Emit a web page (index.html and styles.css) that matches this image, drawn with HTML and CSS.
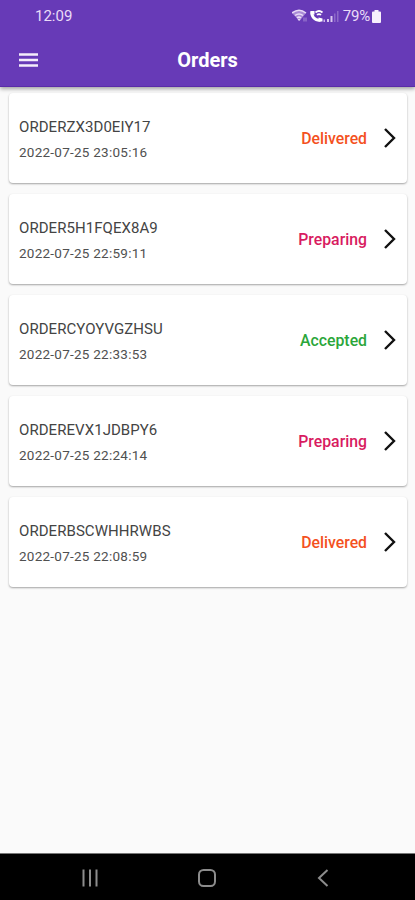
FILE: index.html
```html
<!DOCTYPE html>
<html lang="en">
<head>
  <meta charset="UTF-8" />
  <meta name="viewport" content="width=device-width, initial-scale=1.0" />
  <title>Orders</title>
  <link rel="stylesheet" href="styles.css">
</head>
<body>
  <header class="header">
    <div class="status-bar">
      <span class="time">12:09</span>
      <div class="status-icons">
        <svg width="48" height="16" viewBox="0 0 48 16">
          <!-- wifi -->
          <path d="M0 5Q7-.5 14 5L7.500 13z" fill="#a98bd6" />
          <g fill="none" stroke="#e9dcf7" stroke-width="1.500">
            <path d="M0 5Q7-.5 14 5" />
            <path d="M3 7.500Q7 4.300 11 7.500" />
            <path d="M5 10Q7 8.200 9 10" />
          </g>
          <path d="M5.500 11h3L7 13z" fill="#e9dcf7" />
          <path d="M12 9.500v4M14 9.500v4" stroke="#a98bd6" />
          <!-- wifi calling -->
          <path d="M20 3.500C19 8 22.500 12.800 28.500 12.300" fill="none" stroke="#fff" stroke-width="2.800" />
          <path d="M18.500 3h4v3.500h-4zM26.500 9.500l4 1v3h-4z" fill="#fff" />
          <path d="M23.500 4.500Q27 1.500 30.500 4.500M25 7Q27 5 29 7" fill="none" stroke="#fff" stroke-width="1.700" />
          <!-- signal -->
          <path d="M31.500 11.500H33V14h-1.500z" fill="#c9b2e8" />
          <path d="M35 11h2v3h-2zM38.500 8h2v6h-2z" fill="#d9c6f0" />
          <path d="M42 5.500h1.500V14H42zM45 3h1.500v11H45z" fill="#8d69c8" />
        </svg>
        <span class="battery-text">79%</span>
        <svg width="9" height="13" viewBox="0 0 9 13">
          <path d="M2.500 0h4v1.500H8A1 1 0 0 1 9 2.500V12a1 1 0 0 1-1 1H1a1 1 0 0 1-1-1V2.500A1 1 0 0 1 1 1.500h1.500z" fill="#f7effc" />
        </svg>
      </div>
    </div>
    <div class="app-bar">
      <svg class="menu" width="19" height="14" viewBox="0 0 19 14"><path d="M0 1.500h19M0 7h19M0 12.500h19" /></svg>
      <h1>Orders</h1>
    </div>
  </header>

  <main class="orders">
    <div class="card">
      <div class="info">
        <p class="order-id">ORDERZX3D0EIY17</p>
        <p class="date">2022-07-25 23:05:16</p>
      </div>
      <span class="status delivered">Delivered</span>
      <svg class="arrow" width="14" height="22" viewBox="0 0 14 22"><path d="M2 2l9 9-9 9" /></svg>
    </div>

    <div class="card">
      <div class="info">
        <p class="order-id">ORDER5H1FQEX8A9</p>
        <p class="date">2022-07-25 22:59:11</p>
      </div>
      <span class="status preparing">Preparing</span>
      <svg class="arrow" width="14" height="22" viewBox="0 0 14 22"><path d="M2 2l9 9-9 9" /></svg>
    </div>

    <div class="card">
      <div class="info">
        <p class="order-id">ORDERCYOYVGZHSU</p>
        <p class="date">2022-07-25 22:33:53</p>
      </div>
      <span class="status accepted">Accepted</span>
      <svg class="arrow" width="14" height="22" viewBox="0 0 14 22"><path d="M2 2l9 9-9 9" /></svg>
    </div>

    <div class="card">
      <div class="info">
        <p class="order-id">ORDEREVX1JDBPY6</p>
        <p class="date">2022-07-25 22:24:14</p>
      </div>
      <span class="status preparing">Preparing</span>
      <svg class="arrow" width="14" height="22" viewBox="0 0 14 22"><path d="M2 2l9 9-9 9" /></svg>
    </div>

    <div class="card">
      <div class="info">
        <p class="order-id">ORDERBSCWHHRWBS</p>
        <p class="date">2022-07-25 22:08:59</p>
      </div>
      <span class="status delivered">Delivered</span>
      <svg class="arrow" width="14" height="22" viewBox="0 0 14 22"><path d="M2 2l9 9-9 9" /></svg>
    </div>
  </main>

  <nav class="nav-bar">
    <svg width="20" height="20" viewBox="0 0 20 20"><path d="M3.500 1.500v17M10 1.500v17M16.500 1.500v17" /></svg>
    <svg width="20" height="20" viewBox="0 0 20 20"><rect x="2" y="2" width="16" height="16" rx="4.500" /></svg>
    <svg width="20" height="20" viewBox="0 0 20 20"><path d="M14.500 2l-8.500 8 8.500 8" /></svg>
  </nav>
</body>
</html>
```
FILE: styles.css
```css
* {
  box-sizing: border-box;
}
body {
  margin: 0;
  height: 100vh;
  display: flex;
  flex-direction: column;
  background-color: #fafafa;
  font-family: Roboto, sans-serif;
}
h1, p {
  margin: 0;
}
.header {
  height: 87px;
  background-color: #673ab7;
  color: white;
  border-bottom: 1px solid #5a2ca8;
  box-shadow: 0 2px 4px rgba(0, 0, 0, 0.35);
  z-index: 1;
}
.status-bar {
  height: 32px;
  padding: 0 34px 0 35px;
  display: flex;
  align-items: center;
  justify-content: space-between;
  font-size: 15px;
  color: #eadcf7;
}
.status-icons {
  display: flex;
  align-items: center;
}
.battery-text {
  margin: 0 2px 0 3px;
  letter-spacing: -0.2px;
}
.app-bar {
  height: 55px;
  padding: 0 19px;
  display: grid;
  grid-template-columns: 19px 1fr 19px;
  align-items: center;
}
.menu {
  stroke: #f5edfb;
  stroke-width: 2.4;
}
h1 {
  font-size: 20px;
  font-weight: 700;
  text-align: center;
}
.orders {
  flex: 1;
  padding: 6px 8px 0 9px;
  display: flex;
  flex-direction: column;
  gap: 11px;
}
.card {
  height: 90px;
  padding: 0 10px;
  display: flex;
  align-items: center;
  background-color: white;
  border-radius: 4px;
  box-shadow: 0 1px 2px rgba(0, 0, 0, 0.35);
}
.info {
  flex: 1;
  padding-top: 4px;
}
.order-id {
  font-size: 15px;
  line-height: 26px;
  letter-spacing: 0.06px;
  color: #444;
}
.date {
  font-size: 13.5px;
  line-height: 24px;
  padding-bottom: 2px;
  letter-spacing: 0.25px;
  color: #505050;
}
.status {
  font-size: 15.8px;
  font-weight: 500;
}
.delivered {
  color: #f4511e;
}
.preparing {
  color: #d81b60;
}
.accepted {
  color: #2ba63a;
}
.arrow {
  margin-left: 16px;
}
.arrow path {
  fill: none;
  stroke: #111;
  stroke-width: 2.4;
}
.nav-bar {
  height: 47px;
  padding: 2px 82px 0 80px;
  display: flex;
  align-items: center;
  justify-content: space-between;
  background-color: black;
  border-top: 1px solid #777;
}
.nav-bar svg {
  fill: none;
  stroke: #8c8c8c;
  stroke-width: 2;
}
```
